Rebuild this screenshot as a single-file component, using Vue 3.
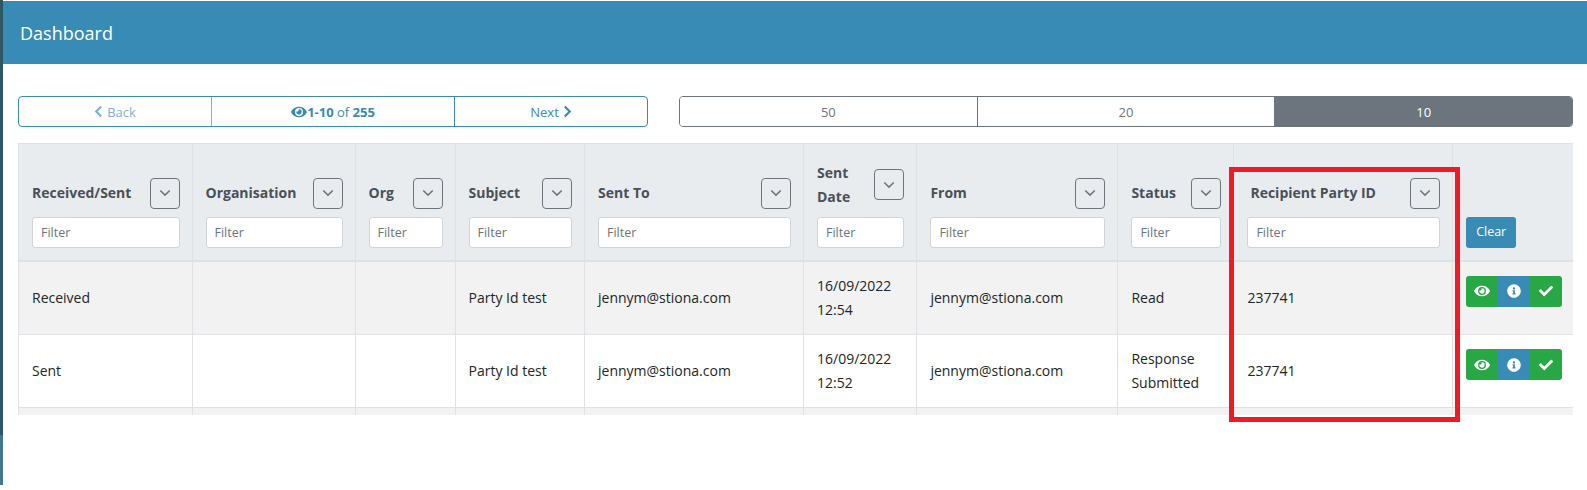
<script setup>
const columns = [
  { title: 'Received/Sent', width: 173.5, filter: true },
  { title: 'Organisation', width: 163, filter: true },
  { title: 'Org', width: 100, filter: true },
  { title: 'Subject', width: 129.5, filter: true },
  { title: 'Sent To', width: 219, filter: true },
  { title: 'Sent Date', width: 113.4, filter: true },
  { title: 'From', width: 201, filter: true },
  { title: 'Status', width: 116, filter: true },
  { title: 'Recipient Party ID', width: 218.8, filter: true, inset: true },
  { title: '', width: 121, filter: false }
]
const rows = [
  { type: 'Received', subject: 'Party Id test', to: 'jennym@stiona.com', date: ['16/09/2022', '12:54'], from: 'jennym@stiona.com', status: 'Read', party: '237741', actions: true },
  { type: 'Sent', subject: 'Party Id test', to: 'jennym@stiona.com', date: ['16/09/2022', '12:52'], from: 'jennym@stiona.com', status: 'Response Submitted', party: '237741', actions: true },
  { type: '', subject: '', to: '', date: [], from: '', status: '', party: '', actions: false }
]
const eye = 'M572.52 241.4C518.29 135.59 410.93 64 288 64S57.68 135.64 3.48 241.41a32.35 32.35 0 0 0 0 29.19C57.71 376.41 165.07 448 288 448s230.32-71.64 284.52-177.41a32.35 32.35 0 0 0 0-29.19zM288 400a144 144 0 1 1 144-144 143.93 143.93 0 0 1-144 144zm0-240a95.31 95.31 0 0 0-25.31 3.79 47.85 47.85 0 0 1-66.9 66.9A95.78 95.78 0 1 0 288 160z'
const info = 'M256 8C119.043 8 8 119.083 8 256c0 136.997 111.043 248 248 248s248-111.003 248-248C504 119.083 392.957 8 256 8zm0 110c23.196 0 42 18.804 42 42s-18.804 42-42 42-42-18.804-42-42 18.804-42 42-42zm56 254c0 6.627-5.373 12-12 12h-88c-6.627 0-12-5.373-12-12v-24c0-6.627 5.373-12 12-12h12v-64h-12c-6.627 0-12-5.373-12-12v-24c0-6.627 5.373-12 12-12h64c6.627 0 12 5.373 12 12v100h12c6.627 0 12 5.373 12 12v24z'
const check = 'M173.898 439.404l-166.4-166.4c-9.997-9.997-9.997-26.206 0-36.204l36.203-36.204c9.997-9.998 26.207-9.998 36.204 0L192 312.69 432.095 72.596c9.997-9.997 26.207-9.997 36.204 0l36.203 36.204c9.997 9.997 9.997 26.206 0 36.204l-294.4 294.401c-9.998 9.997-26.207 9.997-36.204-.001z'
const sizes = ['50', '20', '10']
</script>

<template>
  <div class="page">
    <aside class="strip"><div class="strip-dark"></div><div class="strip-light"></div></aside>
    <div class="main">
      <header class="topbar">Dashboard</header>
      <div class="content">
        <div class="toolbar">
          <div class="pager">
            <button class="pg back">
              <svg class="chev" viewBox="0 0 10 14"><polyline points="8,1.5 2.5,7 8,12.5" /></svg>
              Back
            </button>
            <div class="pg count">
              <svg class="eye-sm" viewBox="0 0 576 512"><path :d="eye" /></svg><b>1-10</b>&nbsp;of&nbsp;<b>255</b>
            </div>
            <button class="pg next">
              Next
              <svg class="chev" viewBox="0 0 10 14"><polyline points="2,1.5 7.5,7 2,12.5" /></svg>
            </button>
          </div>
          <div class="sizes">
            <button v-for="s in sizes" :key="s" class="size" :class="{ on: s === '10' }">{{ s }}</button>
          </div>
        </div>

        <div class="table-clip">
          <table class="grid">
            <colgroup>
              <col v-for="c in columns" :key="c.title" :style="{ width: c.width + 'px' }" />
            </colgroup>
            <thead>
              <tr>
                <th v-for="c in columns" :key="c.title">
                  <template v-if="c.filter">
                    <div class="th-top">
                      <span class="th-title" :class="{ inset: c.inset }">{{ c.title }}</span>
                      <button class="drop">
                        <svg viewBox="0 0 14 9"><polyline points="1.5,1.5 7,7 12.5,1.5" /></svg>
                      </button>
                    </div>
                    <input class="filter" placeholder="Filter" />
                  </template>
                  <button v-else class="clear">Clear</button>
                </th>
              </tr>
            </thead>
            <tbody>
              <tr v-for="(r, i) in rows" :key="i" :class="{ odd: i % 2 === 0 }">
                <td>{{ r.type }}</td>
                <td></td>
                <td></td>
                <td>{{ r.subject }}</td>
                <td>{{ r.to }}</td>
                <td><div v-for="d in r.date" :key="d">{{ d }}</div></td>
                <td>{{ r.from }}</td>
                <td>{{ r.status }}</td>
                <td>{{ r.party }}</td>
                <td class="act-cell">
                  <div v-if="r.actions" class="actions">
                    <button class="act green"><svg viewBox="0 0 576 512"><path :d="eye" /></svg></button>
                    <button class="act blue"><svg viewBox="0 0 512 512"><path :d="info" /></svg></button>
                    <button class="act green"><svg viewBox="0 0 512 512"><path :d="check" /></svg></button>
                  </div>
                </td>
              </tr>
            </tbody>
          </table>
        </div>
      </div>
    </div>
    <div class="highlight"></div>
  </div>
</template>

<style scoped>
.page {
  position: relative;
  display: flex;
  width: 1587px;
  height: 490px;
  overflow: hidden;
  background: #fff;
  font-family: "Open Sans", "Noto Sans", sans-serif;
  font-size: 14px;
  line-height: 24px;
  color: #212529;
}
.strip { width: 3px; display: flex; flex-direction: column; height: 485px; flex: none; }
.strip-dark { height: 435px; background: #2f5664; }
.strip-light { flex: 1; background: #41788c; }
.main { flex: 1; min-width: 0; }
.topbar {
  height: 63px;
  margin-top: 1px;
  background: #388bb4;
  color: #fff;
  font-size: 18px;
  padding-left: 17px;
  display: flex;
  align-items: center;
}
.content { padding: 32px 14px 0 15px; }
.toolbar { display: flex; gap: 31px; }
.pager {
  width: 630px;
  height: 31px;
  display: flex;
  border: 1px solid #388bb4;
  border-radius: 4px;
  box-sizing: border-box;
}
.pg {
  font: inherit;
  font-size: 13px;
  background: none;
  border: 0;
  padding: 0;
  display: flex;
  align-items: center;
  justify-content: center;
  color: #388bb4;
}
.back { width: 193px; opacity: .65; border-right: 1px solid #388bb4; gap: 4px; }
.count { width: 242px; border-right: 1px solid #388bb4; }
.next { flex: 1; gap: 4px; }
.chev { width: 9px; height: 13px; fill: none; stroke: #388bb4; stroke-width: 2.4; }
.eye-sm { width: 16px; height: 14px; fill: #388bb4; }
.sizes {
  width: 894px;
  height: 31px;
  display: flex;
  border: 1px solid #6c757d;
  border-radius: 4px;
  box-sizing: border-box;
  overflow: hidden;
}
.size {
  flex: 1;
  font: inherit;
  font-size: 13px;
  background: #fff;
  border: 0;
  border-right: 1px solid #6c757d;
  color: #6c757d;
  padding: 0;
}
.size:last-child { border-right: 0; }
.size.on { background: #6c757d; color: #fff; }
.table-clip { margin-top: 16px; height: 272px; overflow: hidden; }
.grid { table-layout: fixed; width: 1555.2px; border-collapse: collapse; }
.grid th, .grid td { border: 1px solid #dee2e6; padding: 0 12px 0 13px; box-sizing: border-box; }
.grid th {
  height: 117px;
  background: #e9ecef;
  vertical-align: bottom;
  padding-bottom: 12px;
  text-align: left;
  color: #495057;
  border-bottom-width: 2px;
}
.grid td { height: 74px; vertical-align: middle; }
.grid tbody tr:nth-child(2) td { height: 73px; }
.odd td { background: #f2f2f2; }
.th-top { display: flex; align-items: center; justify-content: space-between; gap: 6px; margin-bottom: 8px; }
.th-title { font-weight: 700; font-size: 14px; }
.th-title.inset { padding-left: 3px; }
.drop {
  flex: none;
  width: 30px;
  height: 31px;
  background: none;
  border: 1px solid #6c757d;
  border-radius: 4px;
  padding: 0;
  display: flex;
  align-items: center;
  justify-content: center;
}
.drop svg { width: 12px; height: 8px; fill: none; stroke: #6c757d; stroke-width: 1.8; }
.filter {
  display: block;
  width: 100%;
  height: 31px;
  box-sizing: border-box;
  border: 1px solid #ced4da;
  border-radius: 3px;
  background: #fff;
  padding: 0 8px;
  font: inherit;
  font-weight: 400;
  font-size: 12.5px;
}
.filter::placeholder { color: #6c757d; opacity: 1; }
.clear {
  width: 50px;
  height: 31px;
  background: #388bb4;
  color: #fff;
  border: 0;
  border-radius: 3px;
  font: inherit;
  font-size: 12.5px;
  font-weight: 400;
  padding: 0;
}
.act-cell { vertical-align: top !important; padding-top: 14px !important; }
.actions { display: flex; width: 96px; height: 31px; border-radius: 3px; overflow: hidden; }
.act { flex: 1; border: 0; padding: 0; display: flex; align-items: center; justify-content: center; }
.act svg { width: 16px; height: 14px; fill: #fff; }
.green { background: #28a745; }
.blue { background: #388bb4; }
.highlight {
  position: absolute;
  left: 1229px;
  top: 167px;
  width: 231px;
  height: 255px;
  box-sizing: border-box;
  border: 5px solid #ed1c24;
  pointer-events: none;
}
</style>
